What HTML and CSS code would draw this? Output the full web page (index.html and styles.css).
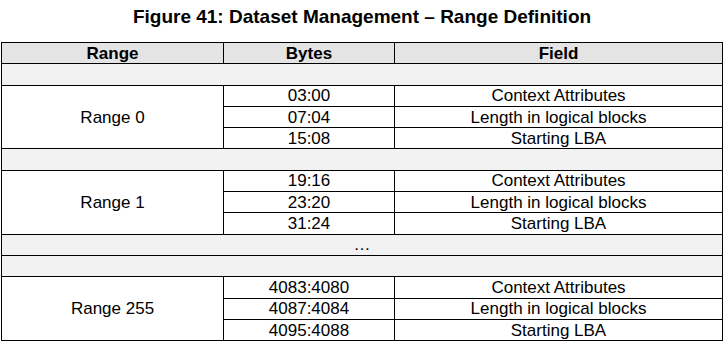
FILE: index.html
```html
<!DOCTYPE html>
<html>
<head>
<meta charset="utf-8">
<link rel="stylesheet" href="styles.css">
</head>
<body>
<div class="page">
  <h1 class="title">Figure 41: Dataset Management – Range Definition</h1>
  <table class="grid">
    <colgroup>
      <col class="c-range">
      <col class="c-bytes">
      <col class="c-field">
    </colgroup>
    <thead>
      <tr class="head">
        <th>Range</th>
        <th>Bytes</th>
        <th>Field</th>
      </tr>
    </thead>
    <tbody>
      <tr class="sep"><td colspan="3"></td></tr>
      <tr><td rowspan="3">Range 0</td><td>03:00</td><td>Context Attributes</td></tr>
      <tr><td>07:04</td><td>Length in logical blocks</td></tr>
      <tr><td>15:08</td><td>Starting LBA</td></tr>
      <tr class="sep"><td colspan="3"></td></tr>
      <tr><td rowspan="3">Range 1</td><td>19:16</td><td>Context Attributes</td></tr>
      <tr><td>23:20</td><td>Length in logical blocks</td></tr>
      <tr><td>31:24</td><td>Starting LBA</td></tr>
      <tr class="sep"><td colspan="3">…</td></tr>
      <tr class="sep"><td colspan="3"></td></tr>
      <tr><td rowspan="3">Range 255</td><td>4083:4080</td><td>Context Attributes</td></tr>
      <tr><td>4087:4084</td><td>Length in logical blocks</td></tr>
      <tr><td>4095:4088</td><td>Starting LBA</td></tr>
    </tbody>
  </table>
</div>
</body>
</html>
```
FILE: styles.css
```css
html, body {
  margin: 0;
  padding: 0;
  background: #ffffff;
}
.page {
  width: 724px;
  font-family: "Liberation Sans", Arial, sans-serif;
  color: #000;
}
.title {
  margin: 0 0 15px 0;
  padding-top: 6px;
  font-size: 19px;
  line-height: 21px;
  font-weight: bold;
  text-align: center;
}
.grid {
  margin-left: 1px;
  width: 721px;
  border-collapse: collapse;
  table-layout: fixed;
  font-size: 17px;
  line-height: 19px;
}
.c-range { width: 222px; }
.c-bytes { width: 171px; }
.c-field { width: 328px; }
.grid th,
.grid td {
  border: 1px solid #000;
  padding: 0;
  height: 20.3px;
  text-align: center;
  vertical-align: middle;
  font-weight: normal;
  white-space: nowrap;
}
.grid th {
  font-weight: bold;
  background: #e4e4e4;
}
.sep td {
  background: #f2f2f2;
}
```
